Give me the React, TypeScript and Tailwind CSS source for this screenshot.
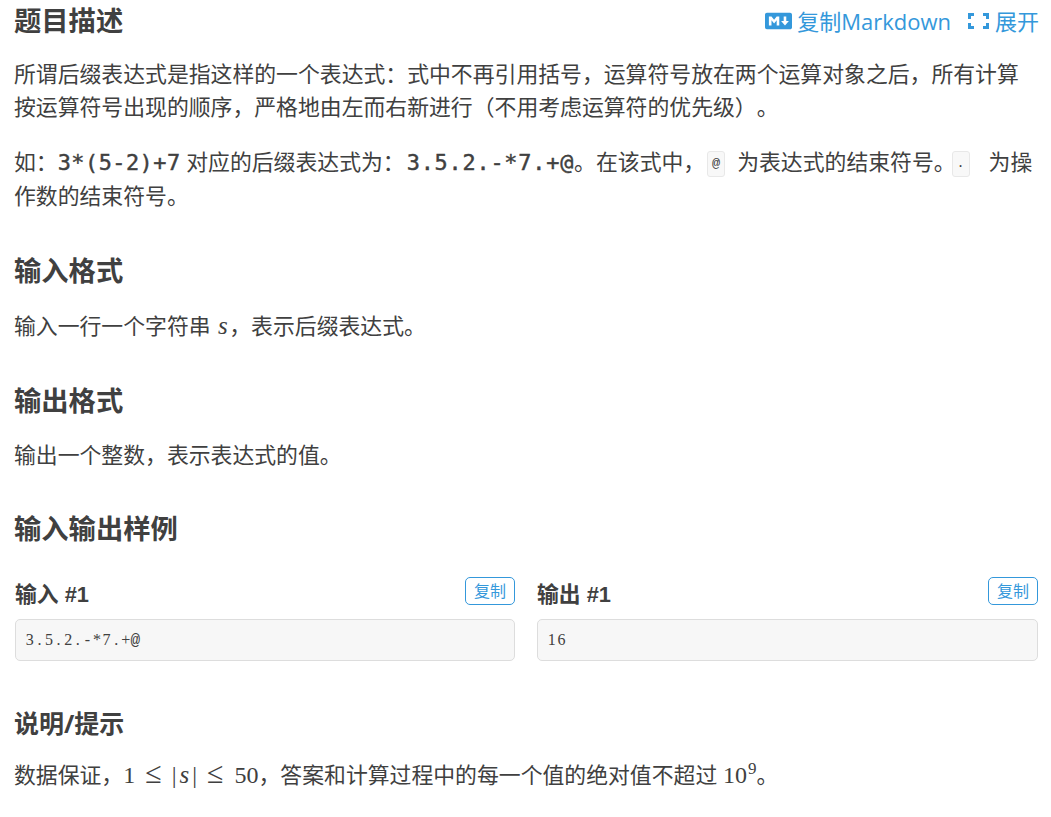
import React from "react";
import { FaMarkdown } from "react-icons/fa";

const sans = "font-['Open_Sans','Noto_Sans_CJK_SC',sans-serif]";
const h2 = "text-[27.3px] leading-[40px] font-bold text-[#404040]";
const serif = "font-['Liberation_Serif',serif]";
const mono = "font-['DejaVu_Sans_Mono',monospace] font-normal [-webkit-text-stroke:0.45px_#404040]";

function Chip({ children, className }: { children: React.ReactNode; className: string }) {
  return (
    <code className={`inline-block align-[3px] w-[18px] h-[26px] leading-[24px] text-center text-[13.5px] font-['Liberation_Mono',monospace] bg-[#f8f8f8] border border-[#e8e8e8] rounded-[3px] ${className}`}>
      {children}
    </code>
  );
}

function Sample({ title, value, className }: { title: string; value: string; className: string }) {
  return (
    <div className={`min-w-0 ${className}`}>
      <div className="flex justify-between items-start h-[42px]">
        <span className="text-[21.8px] leading-[36px] font-bold text-[#404040] font-['Liberation_Sans','Noto_Sans_CJK_SC',sans-serif]">
          {title}
        </span>
        <button className="w-[50px] h-[28px] border border-[#3498db] rounded-[5px] text-[16px] leading-[24px] text-[#3498db]">
          复制
        </button>
      </div>
      <pre className={`h-[42px] px-[9px] leading-[40px] text-[16px] text-[#404040] bg-[#f7f7f7] border-[1.5px] border-[#dddddd] rounded-[5px] ${serif}`}>
        {value.split("").map((c, i) => (
          <span key={i} className={`inline-block w-[9.6px] text-center ${c === "@" ? "font-['Liberation_Mono',monospace]" : ""}`}>
            {c}
          </span>
        ))}
      </pre>
    </div>
  );
}

function ExpandIcon() {
  return (
    <svg viewBox="0 0 21 16" className="w-[21px] h-[16px] ml-[17px] mr-[6px] fill-current">
      <path d="M0 0h6v3H3v3H0zM15 0h6v6h-3V3h-3zM0 10h3v3h3v3H0zM18 10h3v6h-6v-3h3z" />
    </svg>
  );
}

export default function App() {
  return (
    <div className={`${sans} w-[1051px] h-[817px] overflow-hidden bg-white pl-[15px] pr-[13px] text-[21.85px] leading-[33px] text-[#404040] [text-spacing-trim:space-all]`}>
      <div className="flex justify-between items-center h-[41px] -ml-[1px]">
        <h2 className={h2}>题目描述</h2>
        <div className="flex items-center text-[#3498db] text-[22px] leading-[40px] mr-[-1px]">
          <FaMarkdown className="w-[27px] h-[22px] mr-[5px]" />
          <span>复制Markdown</span>
          <ExpandIcon />
          <span>展开</span>
        </div>
      </div>

      <div className="-ml-[1px]">
        <p className="mt-[16px]">
          所谓后缀表达式是指这样的一个表达式：式中不再引用括号，运算符号放在两个运算对象之后，所有计算按运算符号出现的顺序，严格地由左而右新进行（不用考虑运算符的优先级）。
        </p>
        <p className="mt-[22px]">
          如：<span className={`${mono} tracking-[0.5px]`}>3*(5-2)+7</span> 对应的后缀表达式为：<span className={`${mono} ml-[2px] tracking-[0.8px]`}>3.5.2.-*7.+@</span>。在该式中，<Chip className="ml-[2px] mr-[12px]">@</Chip>为表达式的结束符号。<Chip className="-ml-[4px] mr-[19px]">.</Chip>为操作数的结束符号。
        </p>

        <h2 className={`${h2} mt-[39px]`}>输入格式</h2>
        <p className="mt-[18px]">
          输入一行一个字符串 <span className={`${serif} italic text-[25px] inline-block w-[13px] text-center`}>s</span>，表示后缀表达式。
        </p>

        <h2 className={`${h2} mt-[39px]`}>输出格式</h2>
        <p className="mt-[17px]">输出一个整数，表示表达式的值。</p>

        <h2 className={`${h2} mt-[38px]`}>输入输出样例</h2>
      </div>

      <div className="flex gap-[22px] mt-[28px]">
        <Sample title="输入 #1" value="3.5.2.-*7.+@" className="w-[500px]" />
        <Sample title="输出 #1" value="16" className="flex-1" />
      </div>

      <div className="-ml-[1px]">
        <h3 className="text-[25px] leading-[32px] font-bold text-[#404040] mt-[46px]">说明/提示</h3>
        <p className="mt-[19px]">
          数据保证，
          <span className={`${serif} text-[24px]`}>
            1
            <span className="text-[30px] leading-[24px] ml-[10px] mr-[10px]">≤</span>
            <span className="mr-[3px]">|</span>
            <span className="italic text-[25px]">s</span>
            <span className="ml-[3px]">|</span>
            <span className="text-[30px] leading-[24px] ml-[10px] mr-[11px]">≤</span>
            50
          </span>
          ，答案和计算过程中的每一个值的绝对值不超过{" "}
          <span className={`${serif} text-[24px]`}>
            10<sup className="text-[17px] top-[-9px] ml-[1px]">9</sup>
          </span>
          。
        </p>
      </div>
    </div>
  );
}
